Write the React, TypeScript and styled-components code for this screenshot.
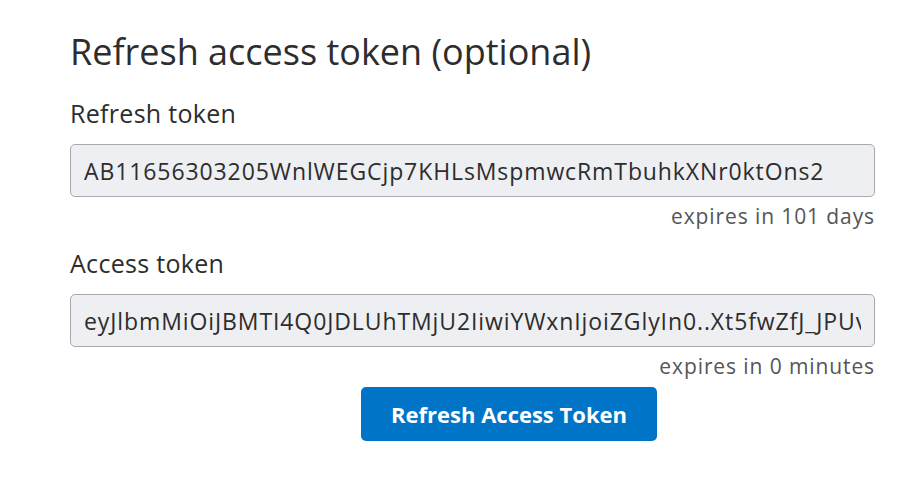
import styled, { createGlobalStyle } from "styled-components";

const GlobalStyle = createGlobalStyle`
    html, body { margin: 0; padding: 0; background: #ffffff; }
    body { font-family: "Open Sans", "Noto Sans", "Liberation Sans", sans-serif; color: #2b2b2b; }
`;

const Page = styled.div`
    padding: 27px 38px 0 70px;
`;

const Heading = styled.h2`
    margin: 0;
    font-size: 36px;
    font-weight: 400;
    line-height: 50px;
    color: #2d2d2d;
`;

const Field = styled.div`
    display: flex;
    flex-direction: column;
    margin-top: ${(p: { $top: number }) => p.$top}px;
`;

const Label = styled.label`
    font-size: 25px;
    line-height: 32px;
    letter-spacing: 0.3px;
    color: #2d2d2d;
`;

const TokenInput = styled.input`
    box-sizing: border-box;
    margin-top: 15px;
    width: 805px;
    height: 53px;
    padding: 0 13px;
    border: 1px solid #a9a9ad;
    border-radius: 5px;
    background: #eeeff2;
    font-family: inherit;
    font-size: 23px;
    letter-spacing: 0.9px;
    color: #2d2d2d;
    outline: none;
`;

const Expiry = styled.div`
    margin-top: 6px;
    text-align: right;
    font-size: 21px;
    line-height: 26px;
    letter-spacing: 0.9px;
    color: #555555;
`;

const ButtonRow = styled.div`
    display: flex;
    padding-left: 291px;
    margin-top: 8px;
`;

const PrimaryButton = styled.button`
    width: 296px;
    height: 54px;
    border: none;
    border-radius: 5px;
    background: #0074c7;
    color: #ffffff;
    font-family: inherit;
    font-size: 22px;
    font-weight: 700;
    cursor: pointer;
`;

export default function App() {
    return (
        <>
            <GlobalStyle />
            <Page>
                <Heading>Refresh access token (optional)</Heading>
                <Field $top={20}>
                    <Label>Refresh token</Label>
                    <TokenInput readOnly value="AB11656303205WnlWEGCjp7KHLsMspmwcRmTbuhkXNr0ktOns2" />
                    <Expiry>expires in 101 days</Expiry>
                </Field>
                <Field $top={18}>
                    <Label>Access token</Label>
                    <TokenInput readOnly value="eyJlbmMiOiJBMTI4Q0JDLUhTMjU2IiwiYWxnIjoiZGlyIn0..Xt5fwZfJ_JPUvQkR8sLm2Tq" />
                    <Expiry>expires in 0 minutes</Expiry>
                </Field>
                <ButtonRow>
                    <PrimaryButton>Refresh Access Token</PrimaryButton>
                </ButtonRow>
            </Page>
        </>
    );
}
